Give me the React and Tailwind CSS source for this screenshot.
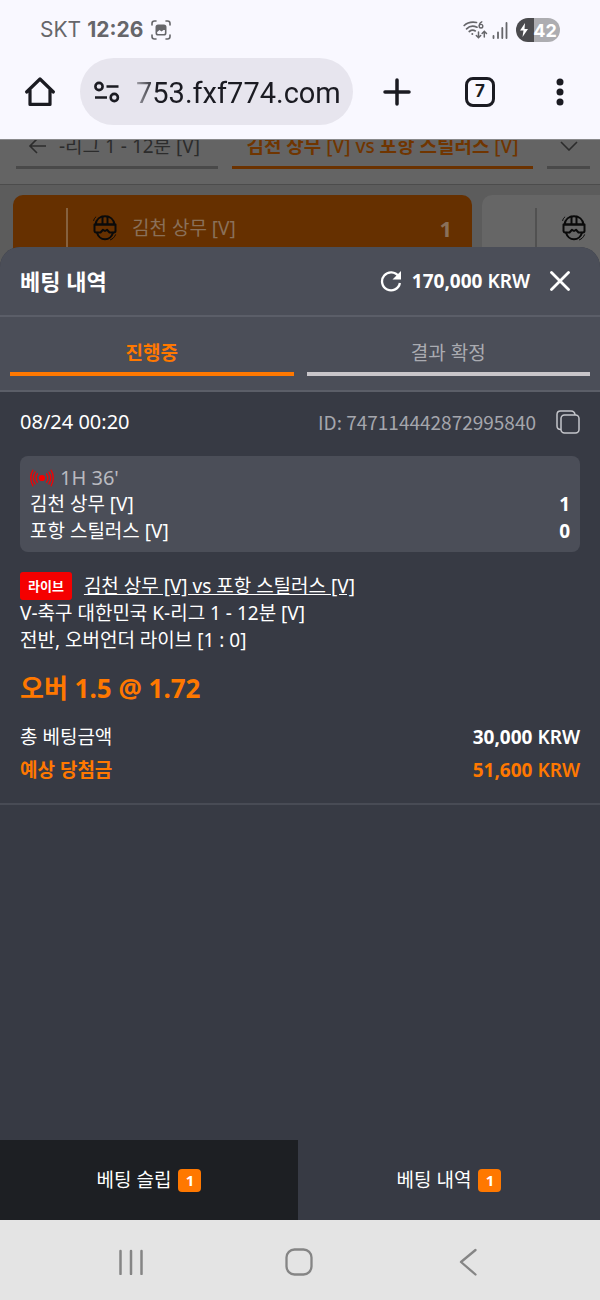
import React, { useState } from "react";

function HelmetIcon() {
    return (
        <svg width="24" height="26" viewBox="0 0 24 26" fill="none" stroke="#0a0a0a" strokeWidth="2" strokeLinejoin="round" strokeLinecap="round">
            <path d="M2.5 9.5C3.2 4.3 7 1.3 12 1.3s8.800 3 9.500 8.200z" />
            <path d="M9.500 1.800v7M14.500 1.800v7" />
            <path d="M1.500 9.500h21v6.300c0 1-.7 1.700-1.600 1.700H16.500L14 14.800l-2 1.200-2-1.200-2.500 2.700H3.100c-.9 0-1.600-.7-1.600-1.700z" />
            <path d="M4 17.700c1 3.300 4 6.600 8 6.600s7-3.300 8-6.600" />
            <path d="M.7 5.500C1 4 1.700 2.900 2.800 2M17.500 24.800c2.300-.9 4-2.600 5-5" strokeWidth="1" />
        </svg>
    )
}

function HomeIcon() {
    return (
        <svg width="32" height="32" viewBox="0 0 32 32" fill="none" stroke="#1b1b22" strokeWidth="3.200" strokeLinejoin="round" strokeLinecap="round">
            <path d="M2.600 16 16 3l13.400 13M6 14v14.400h20V14" />
        </svg>
    )
}

function SiteInfoIcon() {
    return (
        <svg className="shrink-0" width="26" height="22" viewBox="0 0 26 22" fill="none" stroke="#1b1b22" strokeWidth="2.600">
            <circle cx="5" cy="5.500" r="3.600" />
            <path d="M12.500 5.500H24.500M1 16.500h12" />
            <circle cx="20.300" cy="16.500" r="3.600" />
        </svg>
    )
}

function CaptureIcon() {
    return (
        <svg width="20" height="20" viewBox="0 0 20 20" fill="none" stroke="#66666a" strokeWidth="1.600" strokeLinecap="round">
            <path d="M1 5V3.500C1 2 2 1 3.500 1H5M15 1h1.500C18 1 19 2 19 3.500V5M19 15v1.500c0 1.500-1 2.500-2.500 2.500H15M5 19H3.500C2 19 1 18 1 16.500V15" />
            <rect x="5.300" y="5.300" width="9.400" height="9.400" rx="1.800" />
            <path d="M5.500 6h9v4l-2 0-2 1.600L8.500 10l-3 2.500z" fill="#66666a" stroke="none" />
        </svg>
    )
}

function WifiIcon() {
    return (
        <svg width="25" height="20" viewBox="0 0 25 20" fill="none" stroke="#66666a" strokeWidth="1.700" strokeLinecap="round">
            <path d="M1.200 5.500C4 2.800 8 1.600 13.500 2.500M3.600 8.800C6.500 6 10 5.500 14 7.200M6.300 11.500c2-1.500 4.200-1.600 6-.6" />
            <circle cx="9.300" cy="14" r="1" fill="#66666a" stroke="none" />
            <path d="M18.800 1.800C17 2.500 16.300 4 16.300 5.700" strokeWidth="1.400" />
            <circle cx="18" cy="6.200" r="1.800" strokeWidth="1.400" />
            <path d="M15.500 12v5.500M13.300 15.500l2.200 2.200 2.200-2.200M21.300 17v-5.500M19.100 13.500l2.200-2.200 2.200 2.200" strokeWidth="1.500" />
        </svg>
    )
}

function SignalIcon() {
    return (
        <svg width="16" height="17" viewBox="0 0 16 17" stroke="#66666a" strokeWidth="1.800" strokeLinecap="round">
            <path d="M1.500 14v2M6 10.500V16" />
            <path d="M10.300 6v10M14.500 1v15" />
        </svg>
    )
}

function RefreshIcon() {
    return (
        <svg width="22" height="22" viewBox="0 0 22 22" fill="none">
            <path d="M18.500 6.300A9 9 0 1 0 19.900 13" stroke="#fff" strokeWidth="2.300" />
            <path d="M21 1v8.500h-8.500z" fill="#fff" />
        </svg>
    )
}

function CopyIcon() {
    return (
        <svg width="24" height="24" viewBox="0 0 24 24" fill="none" stroke="#c4c5ca" strokeWidth="1.500">
            <rect x="5" y="5" width="18" height="18" rx="3.500" />
            <path d="M5 19.500C2.500 19.500 1 18.500 1 16V4.500C1 2.300 2.300 1 4.500 1H15c2.500 0 3.700 1 4.100 4" />
        </svg>
    )
}

function LiveIcon() {
    return (
        <svg width="24" height="18" viewBox="0 0 24 18" fill="none" stroke="#f50000" strokeWidth="1.300" strokeLinecap="round">
            <circle cx="12" cy="9" r="3.100" fill="#f50000" stroke="none" />
            <path d="M7.400 4.800c-1.500 2.500-1.500 5.900 0 8.400M5.100 3c-2.200 3.600-2.200 8.400 0 12M2.900 1.200C.1 5.700.1 12.300 2.900 16.800" />
            <path d="M16.600 4.800c1.500 2.500 1.500 5.900 0 8.400M18.900 3c2.200 3.600 2.200 8.400 0 12M21.100 1.200c2.800 4.500 2.800 11.100 0 15.600" />
        </svg>
    )
}

function StatusBar() {
    return (
        <div className="flex items-center justify-between h-[58px] px-10 pt-0.5 font-['Inter',sans-serif] text-[21px] text-[#66666a]">
            <div className="flex items-center gap-[6px]">
                <span>SKT</span>
                <span className="font-bold">12:26</span>
                <span className="ml-0.5"><CaptureIcon /></span>
            </div>
            <div className="flex items-center gap-1">
                <WifiIcon />
                <SignalIcon />
                <div className="flex items-center justify-center w-11 h-6 ml-1 rounded-full text-[18px] font-bold text-white bg-[linear-gradient(to_right,#4b4b4e_42%,#adadb1_42%)]">
                    <svg width="10" height="14" viewBox="0 0 10 14" fill="#fff"><path d="M6 0 1 7.500h3.500L3.500 14 9 6H5.500z" /></svg>
                    <span className="ml-1">42</span>
                </div>
            </div>
        </div>
    )
}

function BrowserBar() {
    const [url, setUrl] = useState("753.fxf774.com");

    return (
        <div className="flex items-center h-[81px] pb-[14px] pl-6 pr-[35px]">
            <button aria-label="home"><HomeIcon /></button>
            <div className="flex items-center gap-4 flex-1 min-w-0 h-[67px] ml-6 pl-[14px] pr-2 rounded-full bg-[#e7e5ee]">
                <SiteInfoIcon />
                <input
                    className="w-full min-w-0 pt-1 bg-transparent outline-none font-['Roboto',sans-serif] text-[29px] text-[#1b1b22] mask-[linear-gradient(to_right,#0005,#000_20px)]"
                    type="text"
                    aria-label="url"
                    value={url}
                    onChange={(e) => setUrl(e.target.value)}
                />
            </div>
            <button aria-label="new tab" className="ml-[30px]">
                <svg width="28" height="28" viewBox="0 0 28 28" stroke="#1b1b22" strokeWidth="3.500" strokeLinecap="round"><path d="M14 2v24M2 14h24" /></svg>
            </button>
            <button className="flex items-center justify-center w-[30px] h-[30px] ml-[54px] rounded-lg border-3 border-[#1b1b22] font-['Inter',sans-serif] text-[17px] font-bold text-[#1b1b22]">
                7
            </button>
            <button aria-label="menu" className="ml-[60px]">
                <svg width="10" height="28" viewBox="0 0 10 28" fill="#1b1b22"><circle cx="5" cy="4" r="3.500" /><circle cx="5" cy="14" r="3.500" /><circle cx="5" cy="24" r="3.500" /></svg>
            </button>
        </div>
    )
}

// dimmed match page behind the sheet
function MatchPage() {
    return (
        <div className="h-[128px] overflow-hidden bg-[#5c5c5c] border-t border-[#8a8a8c]">
            <div className="flex items-end gap-[14px] h-[45px] px-4 pr-[10px] pb-[15px] border-b border-[#4c4c4c] bg-[#646464] text-[19px] leading-[22px] whitespace-nowrap">
                <div className="flex items-center w-[202px] pb-[9px] pl-3 border-b-3 border-[#494949] text-[#2c2c2c]">
                    <svg className="mr-3" width="19" height="18" viewBox="0 0 19 18" fill="none" stroke="#2c2c2c" strokeWidth="1.600"><path d="M18 9H2M9 2 2 9l7 7" /></svg>
                    -리그 1 - 12분 [V]
                </div>
                <div className="flex-1 pb-[9px] border-b-3 border-[#6b3200] text-center font-bold text-[#703500]">
                    김천 상무 <span className="font-medium">[V] vs</span> 포항 스틸러스 <span className="font-medium">[V]</span>
                </div>
                <div className="flex justify-center w-[43px] pb-[15px] border-b-3 border-[#494949]">
                    <svg width="18" height="10" viewBox="0 0 18 10" fill="none" stroke="#2c2c2c" strokeWidth="1.600"><path d="m1 1 8 8 8-8" /></svg>
                </div>
            </div>
            <div className="flex gap-[10px] pt-[10px] pl-[13px]">
                <div className="flex w-[459px] h-24 rounded-t-[10px] bg-[#663000] pt-[13px] pr-5">
                    <div className="w-[55px] border-r-2 border-[#85613f]"></div>
                    <div className="flex items-center flex-1 h-10 pl-[25px] text-[19px] text-[#8a705a]">
                        <HelmetIcon />
                        <span className="flex-1 pl-[15px]">김천 상무 [V]</span>
                        <span className="text-[22px] font-bold">1</span>
                    </div>
                </div>
                <div className="flex flex-1 h-24 rounded-tl-[10px] bg-[#666666] pt-[13px]">
                    <div className="w-[55px] border-r-2 border-[#515151]"></div>
                    <div className="flex items-center h-10 pl-[25px]"><HelmetIcon /></div>
                </div>
            </div>
        </div>
    )
}

function SheetTab({ label, active, onClick }) {
    return (
        <button
            onClick={onClick}
            className={`flex-1 pt-[23px] pb-[6px] border-b-4 text-[19px] leading-[26px] ${active ? 'border-[#ff7800] text-[#ff7800] font-bold' : 'border-[#c9c6ca] text-[#aaabb1]'}`}
        >
            {label}
        </button>
    )
}

function SlipTab({ label, count, dark }) {
    return (
        <button className={`flex items-center justify-center gap-[7px] flex-1 h-20 border-r-2 border-[#373a44] text-[19px] text-white ${dark ? 'bg-[#1d1f23]' : 'bg-[#373a44]'}`}>
            {label}
            <span className="w-[23px] h-[23px] rounded bg-[#ff7800] text-[15px] leading-[23px] font-bold">{count}</span>
        </button>
    )
}

function Amount({ value }) {
    return (
        <span className="font-bold">{value} <span className="font-semibold">KRW</span></span>
    )
}

function BetCard() {
    return (
        <div className="px-5 pt-4 pb-[19px] border-b-2 border-[#484b55] text-[19px] leading-[27px] text-white">
            <div className="flex items-center justify-between">
                <span className="text-xl leading-[27px]">08/24 00:20</span>
                <div className="flex items-center gap-5 font-['Noto_Sans_CJK_KR',sans-serif] text-[#a5a6ad]">
                    ID: 747114442872995840
                    <button aria-label="copy"><CopyIcon /></button>
                </div>
            </div>

            <div className="mt-[21px] px-[10px] pt-2 pb-[7px] rounded-lg bg-[#4b4e58]">
                <div className="flex items-center gap-[6px] text-[#b9bac0]">
                    <LiveIcon />
                    <span className="text-xl leading-[27px]">1H 36'</span>
                </div>
                <div className="flex justify-between"><span>김천 상무 [V]</span><b>1</b></div>
                <div className="flex justify-between"><span>포항 스틸러스 [V]</span><b>0</b></div>
            </div>

            <div className="flex items-center mt-5">
                <span className="px-2 rounded-[3px] bg-[#f50000] text-[13px] leading-7 font-bold">라이브</span>
                <a href="#match" className="ml-3 underline">김천 상무 [V] vs 포항 스틸러스 [V]</a>
            </div>
            <p>V-축구 대한민국 K-리그 1 - 12분 [V]</p>
            <p>전반, 오버언더 라이브 [1 : 0]</p>

            <p className="mt-[17px] text-[26px] leading-[34px] font-bold text-[#ff7800]">오버 1.5 @ 1.72</p>

            <div className="flex justify-between mt-[19px]">
                <span>총 베팅금액</span>
                <Amount value="30,000" />
            </div>
            <div className="flex justify-between mt-[6px] text-[#ff7800]">
                <span className="font-bold">예상 당첨금</span>
                <Amount value="51,600" />
            </div>
        </div>
    )
}

function App() {
    const [tab, setTab] = useState("open");

    return (
        <div className="flex flex-col min-h-screen bg-[#f9f8ff] font-['Noto_Sans','Noto_Sans_CJK_KR',sans-serif]">
            <StatusBar />
            <BrowserBar />
            <MatchPage />

            <div className="relative flex flex-col flex-1 -mt-5 rounded-t-[20px] bg-[#373a44]">
                <div className="flex items-center h-[70px] pl-5 pr-[30px] rounded-t-[20px] border-b-2 border-[#5b5e68] bg-[#4b4e58] text-white">
                    <h1 className="flex-1 text-[22px] font-bold">베팅 내역</h1>
                    <button aria-label="refresh"><RefreshIcon /></button>
                    <span className="ml-[10px] text-[19px]"><Amount value="170,000" /></span>
                    <button aria-label="close" className="ml-5">
                        <svg width="20" height="20" viewBox="0 0 20 20" stroke="#fff" strokeWidth="2.800" strokeLinecap="round"><path d="m1.500 1.500 17 17M18.500 1.500l-17 17" /></svg>
                    </button>
                </div>
                <div className="flex gap-[13px] px-[10px] pb-[14px] border-b-2 border-[#5b5e68] bg-[#4b4e58]">
                    <SheetTab label="진행중" active={tab === "open"} onClick={() => setTab("open")} />
                    <SheetTab label="결과 확정" active={tab === "settled"} onClick={() => setTab("settled")} />
                </div>
                <div className="flex-1">
                    <BetCard />
                </div>
                <div className="flex">
                    <SlipTab label="베팅 슬립" count={1} dark />
                    <SlipTab label="베팅 내역" count={1} />
                </div>
            </div>

            <div className="flex items-center justify-between h-20 px-[118px] pt-1 bg-[#e4e4e4]">
                <button aria-label="recents">
                    <svg width="26" height="26" viewBox="0 0 26 26" stroke="#858585" strokeWidth="2.500" strokeLinecap="round"><path d="M2.500 2v23M13 2v23M23.500 2v23" /></svg>
                </button>
                <button aria-label="home screen">
                    <svg width="28" height="28" viewBox="0 0 28 28" fill="none" stroke="#858585" strokeWidth="2.300"><rect x="1.500" y="1.500" width="25" height="25" rx="8" /></svg>
                </button>
                <button aria-label="back" className="flex justify-center w-7">
                    <svg width="18" height="28" viewBox="0 0 18 28" fill="none" stroke="#858585" strokeWidth="2.300" strokeLinecap="round" strokeLinejoin="round"><path d="M16.500 2 2 14l14.500 12.500" /></svg>
                </button>
            </div>
        </div>
    )
}

export default App;
